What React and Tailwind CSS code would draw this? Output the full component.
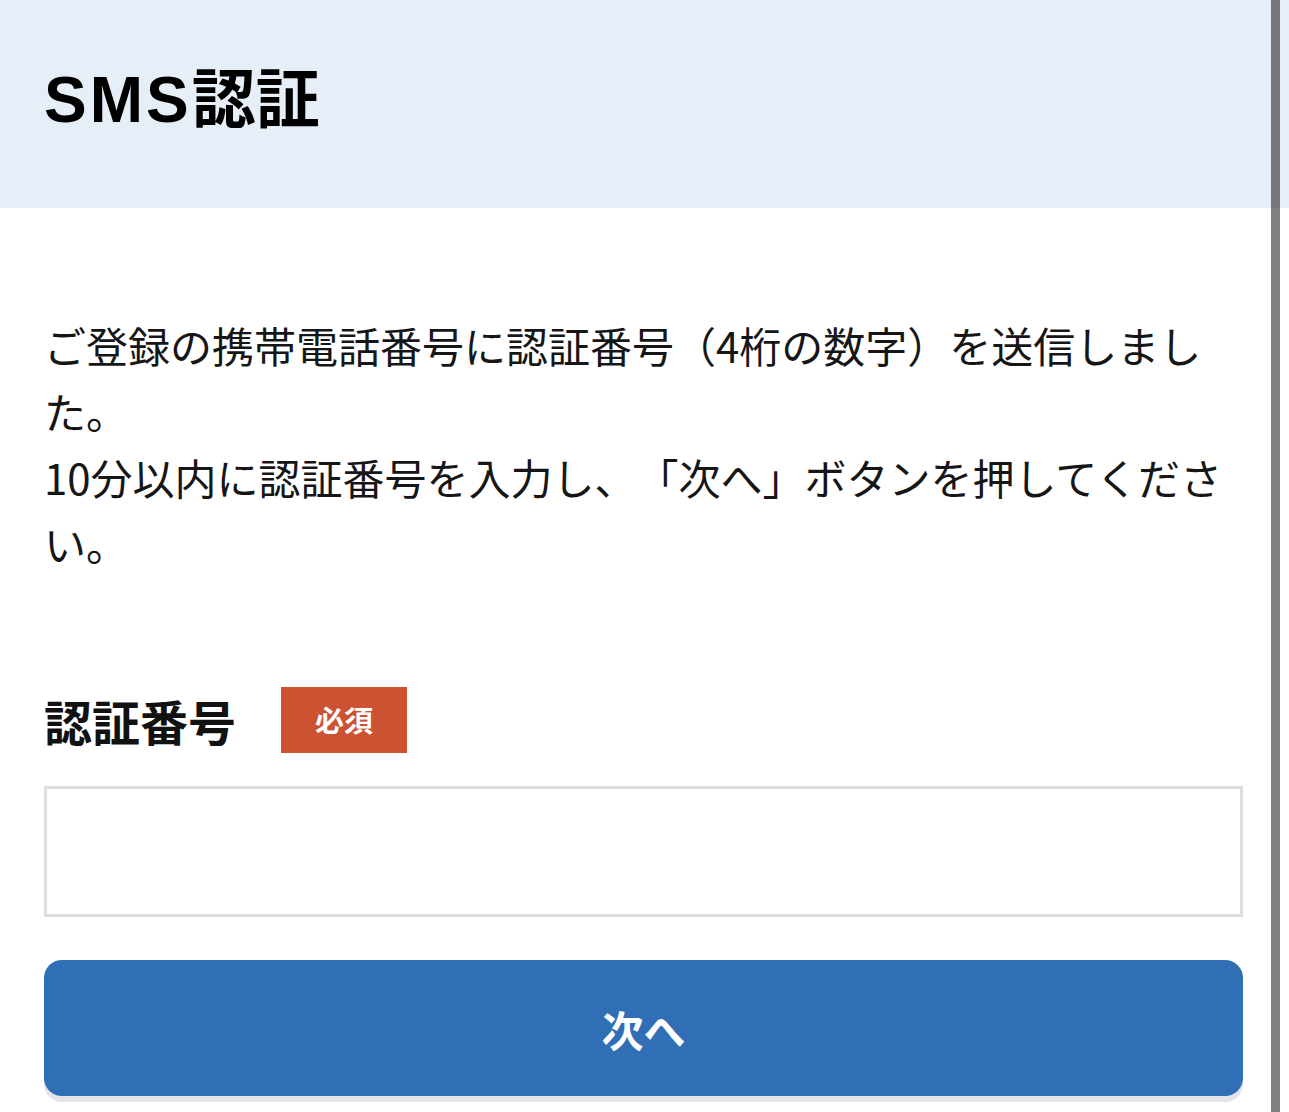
export default function App() {
  return (
    <div className="relative min-h-[1112px] w-full overflow-hidden bg-white font-['Noto_Sans_CJK_JP','Noto_Sans',sans-serif] [text-spacing-trim:space-all]">
      <header className="h-[208px] bg-[#e6eef7] pl-[44px] pt-[62px]">
        <h1 className="text-[64px] font-bold leading-none text-black">
          <span className="font-['Liberation_Sans','Noto_Sans_CJK_JP',sans-serif] tracking-[3px]">SMS</span>認証
        </h1>
      </header>
      <main className="pl-[44px] pr-[46px] pt-[104px]">
        <p className="text-[42px] leading-[66px] text-[#161616]">
          ご登録の携帯電話番号に認証番号（4桁の数字）を送信しました。
          <br />
          10分以内に認証番号を入力し、「次へ」ボタンを押してください。
        </p>
        <div className="mt-[111px] flex items-center gap-[45px]">
          <span className="text-[48px] font-bold leading-none text-[#111]">認証番号</span>
          <span className="flex h-[66px] w-[126px] items-center justify-center bg-[#cc5232] text-[29px] font-bold text-white">
            必須
          </span>
        </div>
        <input
          type="text"
          aria-label="認証番号"
          className="mt-[33px] block h-[131px] w-full border-[3px] border-[#dedede] bg-white px-4 text-[42px] outline-none"
        />
        <button
          type="button"
          className="mt-[43px] flex h-[136px] w-full items-center justify-center rounded-[18px] bg-[#306eb6] text-[42px] font-bold text-white shadow-[0_6px_0_#e3e5eb]"
        >
          次へ
        </button>
      </main>
      <div className="absolute right-[9px] top-0 h-full w-[9px] bg-black/50" />
    </div>
  );
}
